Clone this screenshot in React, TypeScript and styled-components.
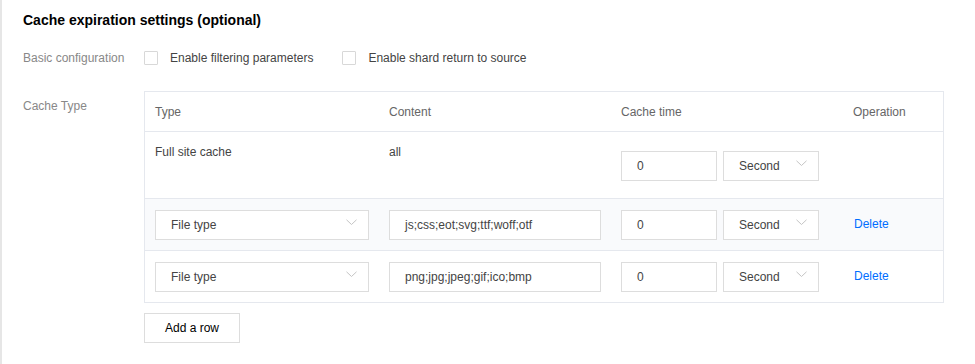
import { createGlobalStyle, styled } from "styled-components";

const GlobalStyle = createGlobalStyle`
  html, body {
    margin: 0;
    padding: 0;
    background: #ffffff;
  }
  body {
    font-family: "Liberation Sans", Arial, Helvetica, sans-serif;
    font-size: 12px;
    color: #444;
  }
`;

const Page = styled.div`
  border-left: 2px solid #e6e6e6;
  min-height: 364px;
  box-sizing: border-box;
  padding: 10px 0 0 21px;
`;

const Title = styled.h3`
  margin: 0;
  font-size: 14px;
  line-height: 20px;
  font-weight: bold;
  color: #000;
`;

const FormRow = styled.div<{ $top: number }>`
  display: flex;
  align-items: flex-start;
  margin-top: ${props => props.$top}px;
`;

const Label = styled.div<{ $pad: number }>`
  width: 121px;
  flex: none;
  color: #888;
  line-height: 18px;
  padding-top: ${props => props.$pad}px;
`;

const Checks = styled.div`
  display: flex;
  align-items: center;
  height: 18px;
`;

const CheckItem = styled.label`
  display: flex;
  align-items: center;
  margin-right: 29px;
  color: #444;
  line-height: 18px;
`;

const CheckBox = styled.span`
  width: 12px;
  height: 12px;
  border: 1px solid #d8d8d8;
  border-radius: 1px;
  margin-right: 12px;
  background: #fff;
`;

const Content = styled.div`
  display: flex;
  flex-direction: column;
  align-items: flex-start;
`;

const Table = styled.div`
  width: 800px;
  box-sizing: border-box;
  border: 1px solid #e5e8ee;
`;

const Row = styled.div<{ $head?: boolean; $shaded?: boolean; $height: number }>`
  display: grid;
  grid-template-columns: 234px 232px 232px 100px;
  height: ${props => props.$height}px;
  background: ${props => (props.$shaded ? "#f9fafc" : "#fff")};
  border-bottom: 1px solid #e5e8ee;
  color: ${props => (props.$head ? "#666" : "#444")};
  align-items: ${props => (props.$head ? "center" : "start")};
  &:last-child {
    border-bottom: 0;
  }
`;

const Cell = styled.div<{ $pt?: number }>`
  padding: ${props => props.$pt ?? 0}px 10px 0 10px;
  line-height: 18px;
  display: flex;
  align-items: center;
  gap: 6px;
`;

const Input = styled.div<{ $w: number }>`
  width: ${props => props.$w}px;
  height: 30px;
  box-sizing: border-box;
  border: 1px solid #dddddd;
  background: #fff;
  padding: 0 15px;
  line-height: 28px;
  color: #444;
  white-space: nowrap;
`;

const Select = styled(Input)`
  position: relative;
`;

const Chevron = styled.svg`
  position: absolute;
  right: 11px;
  top: 8px;
`;

const LinkText = styled.a`
  color: #006eff;
  text-decoration: none;
  line-height: 28px;
  padding-left: 1px;
`;

const Button = styled.button`
  margin-top: 10px;
  width: 96px;
  height: 30px;
  border: 1px solid #dddddd;
  background: #fff;
  font-family: inherit;
  font-size: 12px;
  color: #000;
  padding: 0;
`;

function Arrow() {
  return (
    <Chevron width="11" height="7" viewBox="0 0 11 7">
      <path d="M0.5 0.8 L5.5 5.5 L10.5 0.8" fill="none" stroke="#c4c4c4" strokeWidth="1" />
    </Chevron>
  );
}

function SelectBox({ value, width }: { value: string; width: number }) {
  return (
    <Select $w={width}>
      {value}
      <Arrow />
    </Select>
  );
}

function TimeCell({ pt }: { pt: number }) {
  return (
    <Cell $pt={pt}>
      <Input $w={96}>0</Input>
      <SelectBox value="Second" width={96} />
    </Cell>
  );
}

const rules = [
  { type: "File type", content: "js;css;eot;svg;ttf;woff;otf", shaded: true },
  { type: "File type", content: "png;jpg;jpeg;gif;ico;bmp", shaded: false },
];

export default function App() {
  return (
    <>
      <GlobalStyle />
      <Page>
        <Title>Cache expiration settings (optional)</Title>
        <FormRow $top={19}>
          <Label $pad={0}>Basic configuration</Label>
          <Checks>
            <CheckItem>
              <CheckBox />
              Enable filtering parameters
            </CheckItem>
            <CheckItem>
              <CheckBox />
              Enable shard return to source
            </CheckItem>
          </Checks>
        </FormRow>
        <FormRow $top={24}>
          <Label $pad={6}>Cache Type</Label>
          <Content>
            <Table>
              <Row $head $height={39}>
                <Cell>Type</Cell>
                <Cell>Content</Cell>
                <Cell>Cache time</Cell>
                <Cell>Operation</Cell>
              </Row>
              <Row $height={66}>
                <Cell $pt={11}>Full site cache</Cell>
                <Cell $pt={11}>all</Cell>
                <TimeCell pt={19} />
                <Cell />
              </Row>
              {rules.map((r, i) => (
                <Row key={i} $shaded={r.shaded} $height={51}>
                  <Cell $pt={11}>
                    <SelectBox value={r.type} width={214} />
                  </Cell>
                  <Cell $pt={11}>
                    <Input $w={212}>{r.content}</Input>
                  </Cell>
                  <TimeCell pt={11} />
                  <Cell $pt={11}>
                    <LinkText href="#">Delete</LinkText>
                  </Cell>
                </Row>
              ))}
            </Table>
            <Button>Add a row</Button>
          </Content>
        </FormRow>
      </Page>
    </>
  );
}
